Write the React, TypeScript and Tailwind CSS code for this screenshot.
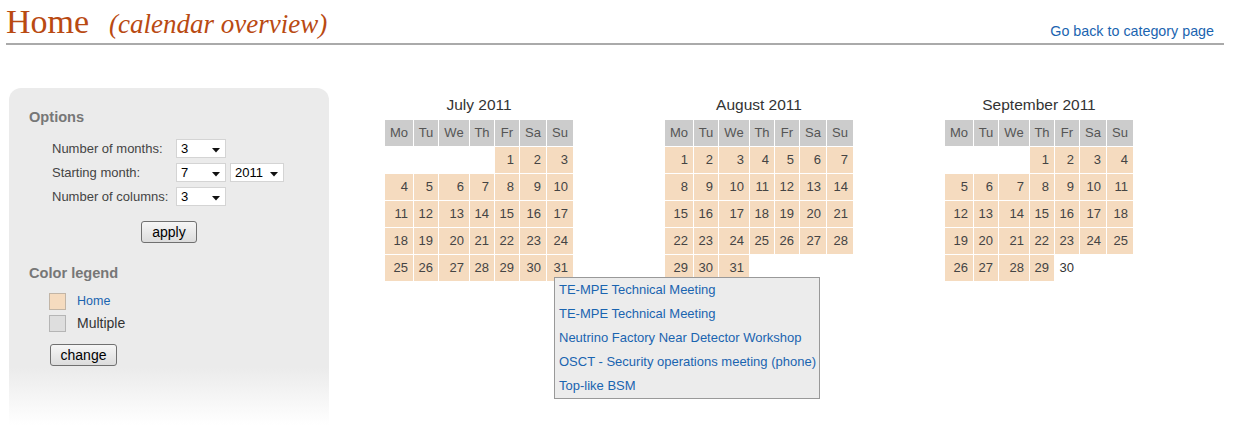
import React from "react";

type Day = { n: number; busy: boolean } | null;

const COLS = ["w-[28px]", "w-[24px]", "w-[30px]", "w-[24px]", "w-[24px]", "w-[26px]", "w-[26px]"];
const WEEKDAYS = ["Mo", "Tu", "We", "Th", "Fr", "Sa", "Su"];

function buildMonth(offset: number, days: number, free: number[] = []): Day[] {
  const cells: Day[] = [];
  for (let i = 0; i < offset; i++) cells.push(null);
  for (let d = 1; d <= days; d++) cells.push({ n: d, busy: !free.includes(d) });
  return cells;
}

const months = [
  { title: "July 2011", cells: buildMonth(4, 31) },
  { title: "August 2011", cells: buildMonth(0, 31) },
  { title: "September 2011", cells: buildMonth(3, 30, [30]) },
];

const events = [
  "TE-MPE Technical Meeting",
  "TE-MPE Technical Meeting",
  "Neutrino Factory Near Detector Workshop",
  "OSCT - Security operations meeting (phone)",
  "Top-like BSM",
];

function Caret() {
  return (
    <svg width="8" height="5" viewBox="0 0 8 5" className="absolute right-[5px] top-[8px]">
      <polygon points="0,0 8,0 4,4.5" fill="#111" />
    </svg>
  );
}

function FakeSelect({ value, width }: { value: string; width: string }) {
  return (
    <div className={`relative h-[19px] ${width} bg-white border border-[#d4d4d4] pl-[4px] text-[13px] leading-[17px] text-black`}>
      {value}
      <Caret />
    </div>
  );
}

function GrayButton({ label, className }: { label: string; className: string }) {
  return (
    <button
      className={`h-[22px] rounded-[3px] border border-[#707070] bg-[linear-gradient(to_bottom,#f6f6f6,#dcdcdc)] text-[14px] leading-[20px] text-black ${className}`}
    >
      {label}
    </button>
  );
}

function MonthTable({ title, cells }: { title: string; cells: Day[] }) {
  return (
    <div className="w-[280px] flex flex-col items-center">
      <div className="h-[20px] leading-[20px] text-[15.5px] text-[#333] mb-[5px]">{title}</div>
      <div className="flex flex-col gap-px">
        <div className="flex gap-px">
          {WEEKDAYS.map((w, i) => (
            <div key={w} className={`${COLS[i]} h-[26px] leading-[26px] bg-[#cccccc] text-center text-[13px] text-[#555]`}>
              {w}
            </div>
          ))}
        </div>
        {Array.from({ length: Math.ceil(cells.length / 7) }).map((_, r) => (
          <div key={r} className="flex gap-px">
            {WEEKDAYS.map((_, c) => {
              const cell = cells[r * 7 + c];
              return (
                <div
                  key={c}
                  className={`${COLS[c]} h-[26px] leading-[26px] text-right pr-[5px] text-[13px] ${
                    cell && cell.busy ? "bg-[#f5dbbf] text-[#444]" : "text-[#333]"
                  }`}
                >
                  {cell ? cell.n : ""}
                </div>
              );
            })}
          </div>
        ))}
      </div>
    </div>
  );
}

export default function App() {
  return (
    <div className="min-h-screen bg-white font-['Liberation_Sans',Arial,sans-serif]">
      {/* Title bar */}
      <header className="ml-[6px] mr-[14px] h-[45px] border-b-2 border-[#aaaaaa] flex items-end justify-between">
        <div className="flex items-baseline pb-[2px] font-['Liberation_Serif','Times_New_Roman',serif] text-[#b94a12]">
          <span className="text-[34px] leading-[34px]">Home</span>
          <span className="ml-[20px] text-[27px] italic leading-[34px]">(calendar overview)</span>
        </div>
        <a className="mr-[10px] pb-[4px] text-[14.3px] leading-[16px] text-[#1a64b0]">Go back to category page</a>
      </header>

      <div className="flex mt-[43px]">
        {/* Options sidebar */}
        <aside className="ml-[9px] w-[320px] h-[337px] rounded-t-[12px] bg-[linear-gradient(to_bottom,#ebebeb_0%,#ebebeb_83%,#ffffff_100%)] pt-[20px]">
          <div className="pl-[20px] text-[14.6px] leading-[18px] font-bold text-[#777]">Options</div>

          <div className="mt-[13px] pl-[43px] flex flex-col gap-[5px] text-[13px] text-[#444]">
            <div className="flex items-center h-[19px]">
              <span className="w-[124px]">Number of months:</span>
              <FakeSelect value="3" width="w-[50px]" />
            </div>
            <div className="flex items-center h-[19px]">
              <span className="w-[124px]">Starting month:</span>
              <FakeSelect value="7" width="w-[50px]" />
              <div className="ml-[4px]">
                <FakeSelect value="2011" width="w-[54px]" />
              </div>
            </div>
            <div className="flex items-center h-[19px]">
              <span className="w-[124px]">Number of columns:</span>
              <FakeSelect value="3" width="w-[50px]" />
            </div>
          </div>

          <div className="mt-[15px] flex justify-center">
            <GrayButton label="apply" className="w-[56px]" />
          </div>

          <div className="mt-[21px] pl-[20px] text-[14.6px] leading-[18px] font-bold text-[#777]">Color legend</div>

          <div className="mt-[11px] pl-[40px] flex flex-col gap-[5px]">
            <div className="flex items-center h-[17px]">
              <div className="w-[17px] h-[17px] border border-[#c2b5a6] bg-[#f5dbbf]" />
              <span className="ml-[11px] text-[12.5px] text-[#1a64b0]">Home</span>
            </div>
            <div className="flex items-center h-[17px]">
              <div className="w-[17px] h-[17px] border border-[#b5b5b5] bg-[#dedede]" />
              <span className="ml-[11px] text-[14px] text-[#333]">Multiple</span>
            </div>
          </div>

          <div className="mt-[11px] pl-[41px]">
            <GrayButton label="change" className="w-[67px]" />
          </div>
        </aside>

        {/* Calendars */}
        <div className="relative ml-[10px] mt-[7px] flex">
          {months.map((m) => (
            <MonthTable key={m.title} title={m.title} cells={m.cells} />
          ))}

          <div className="absolute left-[215px] top-[182px] w-[266px] border border-[#999] bg-[#ececec] pl-[4px]">
            {events.map((e, i) => (
              <div key={i} className="h-[24px] leading-[24px] text-[13px] text-[#1a64b0]">
                {e}
              </div>
            ))}
          </div>
        </div>
      </div>
    </div>
  );
}
